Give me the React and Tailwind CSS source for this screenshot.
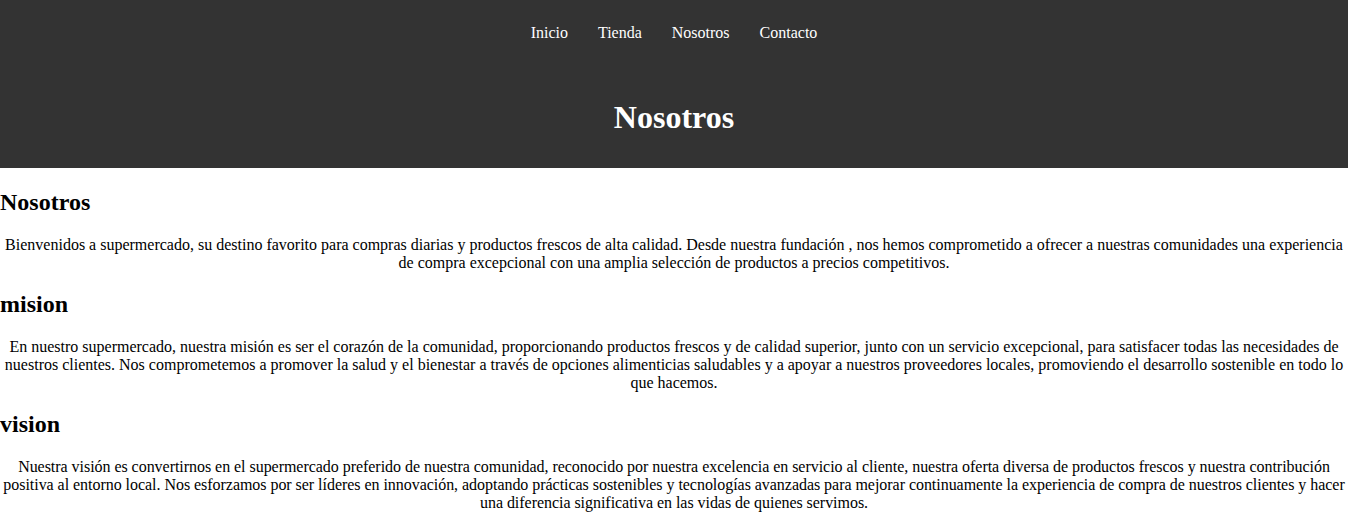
export default function App() {
  return (
    <div className="w-[1348px] bg-white text-black" style={{ fontFamily: '"Liberation Serif", "Times New Roman", serif' }}>
      <header className="bg-[#333333] text-white text-center pt-[24px] pb-[32px]">
        <nav>
          <ul className="flex justify-center gap-[30px] text-[16px] leading-[18px]">
            <li><a href="#">Inicio</a></li>
            <li><a href="#">Tienda</a></li>
            <li><a href="#">Nosotros</a></li>
            <li><a href="#">Contacto</a></li>
          </ul>
        </nav>
        <h1 className="mt-[57px] text-[32px] leading-[37px] font-bold">Nosotros</h1>
      </header>
      <main>
        <section>
          <h2 className="text-[24px] leading-[27px] font-bold mt-[21px] mb-[20px]">Nosotros</h2>
          <p className="text-center text-[16px] leading-[18px] mb-[19px]">
            Bienvenidos a supermercado, su destino favorito para compras diarias y productos frescos de alta calidad. Desde nuestra fundación , nos hemos comprometido a ofrecer a nuestras comunidades una experiencia de compra excepcional con una amplia selección de productos a precios competitivos.
          </p>
        </section>
        <section>
          <h2 className="text-[24px] leading-[27px] font-bold mb-[20px]">mision</h2>
          <p className="text-center text-[16px] leading-[18px] mb-[19px]">
            En nuestro supermercado, nuestra misión es ser el corazón de la comunidad, proporcionando productos frescos y de calidad superior, junto con un servicio excepcional, para satisfacer todas las necesidades de nuestros clientes. Nos comprometemos a promover la salud y el bienestar a través de opciones alimenticias saludables y a apoyar a nuestros proveedores locales, promoviendo el desarrollo sostenible en todo lo que hacemos.
          </p>
        </section>
        <section>
          <h2 className="text-[24px] leading-[27px] font-bold mb-[20px]">vision</h2>
          <p className="text-center text-[16px] leading-[18px] tracking-[-0.04px] mb-[19px]">
            Nuestra visión es convertirnos en el supermercado preferido de nuestra comunidad, reconocido por nuestra excelencia en servicio al cliente, nuestra oferta diversa de productos frescos y nuestra contribución positiva al entorno local. Nos esforzamos por ser líderes en innovación, adoptando prácticas sostenibles y tecnologías avanzadas para mejorar continuamente la experiencia de compra de nuestros clientes y hacer una diferencia significativa en las vidas de quienes servimos.
          </p>
        </section>
      </main>
    </div>
  );
}
